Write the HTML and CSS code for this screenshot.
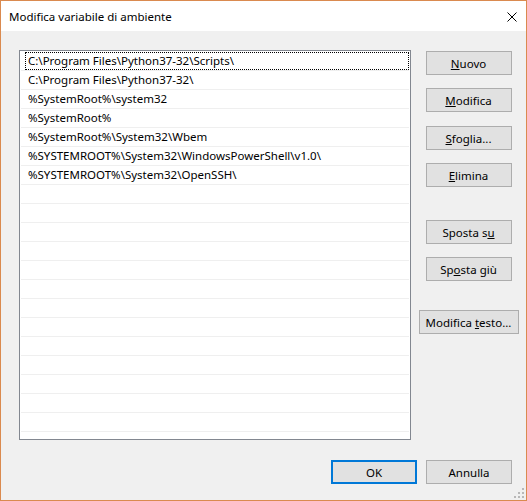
FILE: index.html
```html
<!DOCTYPE html>
<html lang="it">
<head>
    <meta charset="UTF-8">
    <title>Modifica variabile di ambiente</title>
    <link rel="stylesheet" href="styles.css">
</head>
<body>
    <div class="window">
        <div class="titlebar">
            <span class="title">Modifica variabile di ambiente</span>
            <svg class="close" width="10" height="10" viewBox="0 0 10 10">
                <path d="M0.5 0.5 L9.5 9.5 M9.5 0.5 L0.5 9.5" stroke="#000" stroke-width="1" fill="none"/>
            </svg>
        </div>

        <div class="content">
            <div class="list">
                <div class="row"><span class="cell focused">C:\Program Files\Python37-32\Scripts\</span></div>
                <div class="row"><span class="cell">C:\Program Files\Python37-32\</span></div>
                <div class="row"><span class="cell">%SystemRoot%\system32</span></div>
                <div class="row"><span class="cell">%SystemRoot%</span></div>
                <div class="row"><span class="cell">%SystemRoot%\System32\Wbem</span></div>
                <div class="row"><span class="cell">%SYSTEMROOT%\System32\WindowsPowerShell\v1.0\</span></div>
                <div class="row"><span class="cell">%SYSTEMROOT%\System32\OpenSSH\</span></div>
                <div class="row"></div>
                <div class="row"></div>
                <div class="row"></div>
                <div class="row"></div>
                <div class="row"></div>
                <div class="row"></div>
                <div class="row"></div>
                <div class="row"></div>
                <div class="row"></div>
                <div class="row"></div>
                <div class="row"></div>
                <div class="row"></div>
                <div class="row"></div>
                <div class="row"></div>
            </div>

            <div class="actions">
                <button class="btn b-new"><u>N</u>uovo</button>
                <button class="btn b-edit"><u>M</u>odifica</button>
                <button class="btn b-browse"><u>S</u>foglia...</button>
                <button class="btn b-delete"><u>E</u>limina</button>
                <button class="btn b-up">Sposta s<u>u</u></button>
                <button class="btn b-down">Sp<u>o</u>sta giù</button>
                <button class="btn b-text">Modifica <u>t</u>esto...</button>
            </div>
        </div>

        <div class="footer">
            <button class="btn default">OK</button>
            <button class="btn">Annulla</button>
        </div>

        <svg class="grip" width="10" height="10" viewBox="0 0 10 10">
            <rect x="8" y="0" width="2" height="2" fill="#b8b8b8"/>
            <rect x="4" y="4" width="2" height="2" fill="#b8b8b8"/>
            <rect x="8" y="4" width="2" height="2" fill="#b8b8b8"/>
            <rect x="0" y="8" width="2" height="2" fill="#b8b8b8"/>
            <rect x="4" y="8" width="2" height="2" fill="#b8b8b8"/>
            <rect x="8" y="8" width="2" height="2" fill="#b8b8b8"/>
        </svg>
    </div>
</body>
</html>
```

FILE: styles.css
```css
* {
    box-sizing: border-box;
}
body {
    margin: 0;
    font-family: "Noto Sans", "Open Sans", sans-serif;
    font-size: 11.5px;
    color: #000;
}
.window {
    position: relative;
    width: 527px;
    height: 501px;
    border: 1px solid #da8a4f;
    background-color: #f0f0f0;
}
.titlebar {
    height: 30px;
    background: #fff;
    display: flex;
    align-items: center;
    justify-content: space-between;
    padding: 0 9px 0 8px;
}
.title {
    font-size: 11.5px;
}
.close {
    display: block;
    margin-top: 1px;
}
.content {
    display: flex;
    padding: 19px 0 0 18px;
}
.list {
    width: 392px;
    height: 390px;
    border: 1px solid #828790;
    background: #fff;
    padding: 1px;
    overflow: hidden;
}
.row {
    height: 19px;
    border-bottom: 1px solid #efefef;
    padding-left: 4px;
    display: flex;
}
.cell {
    flex: 1;
    height: 18px;
    line-height: 16px;
    padding-left: 2px;
    border: 1px solid transparent;
    white-space: nowrap;
}
.cell.focused {
    border: 1px dotted #000;
}
.actions {
    width: 101px;
    margin-left: 7px;
    display: flex;
    flex-direction: column;
    align-items: center;
}
.btn {
    width: 86px;
    height: 24px;
    padding: 0;
    background: #e1e1e1;
    border: 1px solid #adadad;
    font-family: inherit;
    font-size: 11.5px;
    color: #000;
}
.b-new { margin-top: 1px; }
.b-edit { margin-top: 13px; }
.b-browse { margin-top: 14px; }
.b-delete { margin-top: 13px; }
.b-up { margin-top: 33px; }
.b-down { margin-top: 13px; }
.b-text {
    margin-top: 29px;
    width: 100px;
}
.footer {
    display: flex;
    justify-content: flex-end;
    gap: 9px;
    padding: 20px 14px 0 0;
}
.btn.default {
    border: 2px solid #0078d7;
}
.grip {
    position: absolute;
    right: 2px;
    bottom: 2px;
}
```
